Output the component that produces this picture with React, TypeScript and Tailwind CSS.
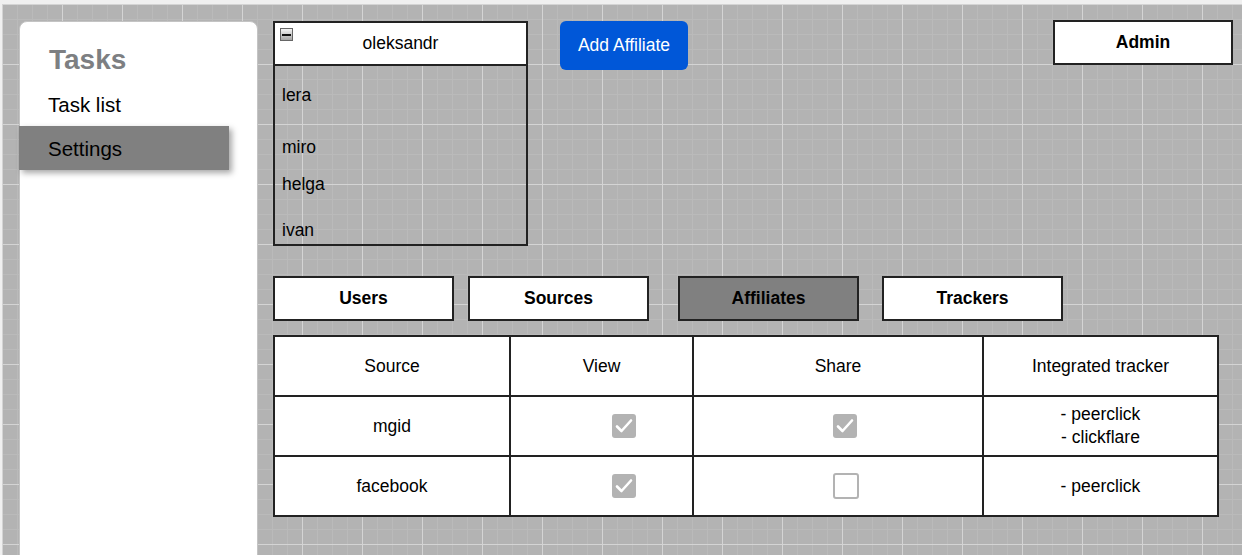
import { Fragment } from 'react';

const members = [
  { name: 'lera', mt: 'mt-[19px]' },
  { name: 'miro', mt: 'mt-[32px]' },
  { name: 'helga', mt: 'mt-[17px]' },
  { name: 'ivan', mt: 'mt-[26px]' },
];

const rows = [
  { source: 'mgid', view: true, share: true, trackers: ['peerclick', 'clickflare'] },
  { source: 'facebook', view: true, share: false, trackers: ['peerclick'] },
];

function CheckBox({ checked }: { checked: boolean }) {
  if (!checked) {
    return <span className="block h-[26px] w-[26px] rounded-[3px] border-2 border-[#b3b3b3] bg-white" />;
  }
  return (
    <span className="flex h-[24px] w-[24px] items-center justify-center rounded-[3px] bg-[#b3b3b3]">
      <svg width="24" height="24" viewBox="0 0 24 24" fill="none">
        <path d="M5 12.5l4.5 4.5L19 6.5" stroke="#fff" strokeWidth="2.6" strokeLinecap="round" strokeLinejoin="round" />
      </svg>
    </span>
  );
}

function Tab({ label, active, className }: { label: string; active?: boolean; className: string }) {
  return (
    <div
      className={`flex h-[45px] w-[181px] items-center justify-center border-2 border-[#222] text-[17.5px] font-bold text-black ${
        active ? 'bg-[#808080]' : 'bg-white'
      } ${className}`}
    >
      {label}
    </div>
  );
}

export default function App() {
  return (
    <div className="h-[555px] w-[1242px] overflow-hidden bg-[#f0f0f0] pl-[2px] pt-[4px] font-['Liberation_Sans',Arial,sans-serif] text-black">
      <div className="flex h-full items-start bg-[#b3b3b3] pl-[17px] pt-[17px] [background-image:linear-gradient(to_right,#d4d4d4_1px,transparent_1px),linear-gradient(to_bottom,#d4d4d4_1px,transparent_1px),linear-gradient(to_right,#bababa_1px,transparent_1px),linear-gradient(to_bottom,#bababa_1px,transparent_1px)] [background-size:60px_60px,60px_60px,15px_15px,15px_15px]">
        {/* Sidebar */}
        <aside className="h-[600px] w-[239px] shrink-0 rounded-t-[8px] border border-[#c4c4c4] bg-white">
          <div className="mt-[22px] pl-[29px] text-[28px] leading-[32px] font-bold text-[#7d7f82]">Tasks</div>
          <div className="mt-[17px] pl-[28px] text-[20.5px] leading-[24px]">Task list</div>
          <div className="mt-[9px] -ml-px flex h-[44px] w-[210px] items-center bg-[#808080] pl-[29px] pt-[3px] text-[20.5px] shadow-[3px_3px_6px_rgba(0,0,0,0.35)]">
            Settings
          </div>
        </aside>

        {/* Main */}
        <main className="ml-[15px] w-[960px] shrink-0">
          <div className="flex items-start">
            <div className="flex h-[225px] w-[255px] flex-col border-2 border-[#222]">
              <div className="relative flex h-[43px] shrink-0 items-center justify-center border-b-2 border-[#222] bg-white text-[17.5px]">
                <span className="absolute left-[5px] top-[5px] flex h-[13px] w-[13px] items-center justify-center border border-[#666] bg-[linear-gradient(to_bottom,#f4f4f4,#a6a6a6)]">
                  <span className="block h-[2px] w-[9px] bg-[#111]" />
                </span>
                oleksandr
              </div>
              <div className="flex flex-col pl-[7px] text-[17.5px] leading-[20px]">
                {members.map((m) => (
                  <span key={m.name} className={m.mt}>
                    {m.name}
                  </span>
                ))}
              </div>
            </div>

            <button className="ml-[32px] flex h-[49px] w-[128px] items-center justify-center rounded-[6px] bg-[#0057d8] text-[17.5px] text-white">
              Add Affiliate
            </button>

            <div className="ml-auto -mt-px flex h-[45px] w-[180px] items-center justify-center border-2 border-[#222] bg-white text-[17.5px] font-bold">
              Admin
            </div>
          </div>

          {/* Tabs */}
          <div className="mt-[30px] flex">
            <Tab label="Users" className="" />
            <Tab label="Sources" className="ml-[14px]" />
            <Tab label="Affiliates" active className="ml-[29px]" />
            <Tab label="Trackers" className="ml-[23px]" />
          </div>

          {/* Table */}
          <table className="mt-[14px] w-[944px] table-fixed border-collapse bg-white text-[17.5px]">
            <colgroup>
              <col className="w-[236px]" />
              <col className="w-[183px]" />
              <col className="w-[290px]" />
              <col className="w-[235px]" />
            </colgroup>
            <thead>
              <tr className="h-[60px]">
                {['Source', 'View', 'Share', 'Integrated tracker'].map((h) => (
                  <th key={h} className="border-2 border-[#222] text-center font-normal">
                    {h}
                  </th>
                ))}
              </tr>
            </thead>
            <tbody>
              {rows.map((r) => (
                <tr key={r.source} className="h-[60px]">
                  <td className="border-2 border-[#222] text-center">{r.source}</td>
                  <td className="border-2 border-[#222] pl-[101px]">
                    <CheckBox checked={r.view} />
                  </td>
                  <td className="border-2 border-[#222] pl-[139px]">
                    <CheckBox checked={r.share} />
                  </td>
                  <td className="border-2 border-[#222] text-center leading-[23px]">
                    {r.trackers.map((t, i) => (
                      <Fragment key={t}>
                        {i > 0 && <br />}- {t}
                      </Fragment>
                    ))}
                  </td>
                </tr>
              ))}
            </tbody>
          </table>
        </main>
      </div>
    </div>
  );
}
